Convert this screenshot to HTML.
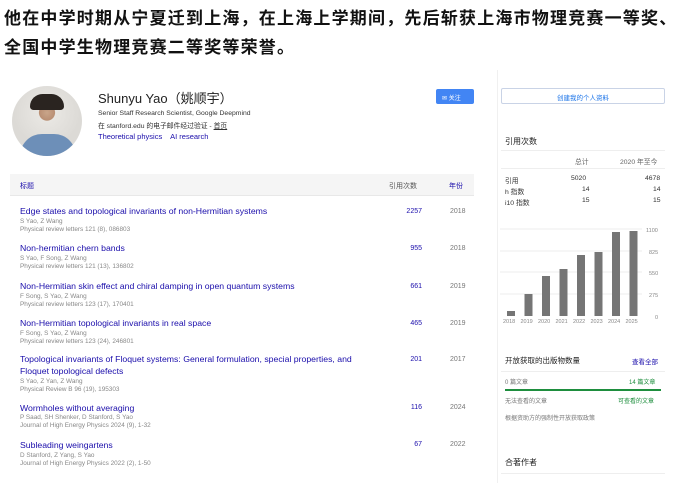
<!DOCTYPE html>
<html><head><meta charset="utf-8"><style>
*{margin:0;padding:0;box-sizing:border-box}
body{width:673px;height:483px;background:#fff;position:relative;overflow:hidden;font-family:"Liberation Sans","Noto Sans CJK SC",sans-serif;}
.a{position:absolute;white-space:nowrap}
.top{font-weight:bold;font-size:17px;letter-spacing:1.2px;color:#111;left:4px}
.t{color:#1a0dab;font-size:8.7px;left:20px}
.g{color:#888;font-size:6.4px;left:20px}
.n{color:#1a0dab;font-size:7px;width:40px;text-align:right}
.y{color:#777;font-size:7px}
.s{font-size:6.8px;color:#333}
</style></head><body>
<div class="a top" style="top:4px">他在中学时期从宁夏迁到上海，在上海上学期间，先后斩获上海市物理竞赛一等奖、</div>
<div class="a top" style="top:33px">全国中学生物理竞赛二等奖等荣誉。</div>

<div class="a" style="left:12px;top:86px;width:70px;height:70px;border-radius:50%;background:radial-gradient(circle at 50% 38%,#c9a58a 0,#b98f74 14%,#e8e6e2 15%,#dcdad6 60%);overflow:hidden">
 <div style="position:absolute;left:18px;top:8px;width:34px;height:16px;background:#2a2420;border-radius:14px 14px 4px 4px"></div>
 <div style="position:absolute;left:8px;top:48px;width:56px;height:30px;background:#6d8fb8;border-radius:22px 22px 0 0"></div>
</div>
<div class="a" style="left:98px;top:88px;font-size:13px;color:#222">Shunyu Yao（姚顺宇）</div>
<div class="a s" style="left:98px;top:110px">Senior Staff Research Scientist, Google Deepmind</div>
<div class="a s" style="left:98px;top:120px">在 stanford.edu 的电子邮件经过验证 - <u>首页</u></div>
<div class="a" style="left:98px;top:132px;font-size:7.5px;color:#1a0dab">Theoretical physics &nbsp;&nbsp; AI research</div>
<div class="a" style="left:436px;top:89px;width:38px;height:15px;background:#4285f4;border-radius:2px;color:#fff;font-size:6px;padding:4px 0 0 6px">✉ 关注</div>

<div class="a" style="left:10px;top:174px;width:464px;height:22px;background:#f5f5f5;border-bottom:1px solid #e8e8e8"></div>
<div class="a" style="left:20px;top:181px;font-size:7px;color:#1a0dab">标题</div>
<div class="a" style="left:389px;top:181px;font-size:7px;color:#555">引用次数</div>
<div class="a" style="left:449px;top:181px;font-size:7px;color:#1a0dab">年份</div>

<div class="a t" style="top:206px">Edge states and topological invariants of non-Hermitian systems</div>
<div class="a g" style="top:218px">S Yao, Z Wang</div><div class="a g" style="top:226px">Physical review letters 121 (8), 086803</div>
<div class="a n" style="left:382px;top:208px">2257</div><div class="a y" style="left:450px;top:208px">2018</div>

<div class="a t" style="top:243px">Non-hermitian chern bands</div>
<div class="a g" style="top:255px">S Yao, F Song, Z Wang</div><div class="a g" style="top:263px">Physical review letters 121 (13), 136802</div>
<div class="a n" style="left:382px;top:245px">955</div><div class="a y" style="left:450px;top:245px">2018</div>

<div class="a t" style="top:281px">Non-Hermitian skin effect and chiral damping in open quantum systems</div>
<div class="a g" style="top:293px">F Song, S Yao, Z Wang</div><div class="a g" style="top:301px">Physical review letters 123 (17), 170401</div>
<div class="a n" style="left:382px;top:283px">661</div><div class="a y" style="left:450px;top:283px">2019</div>

<div class="a t" style="top:318px">Non-Hermitian topological invariants in real space</div>
<div class="a g" style="top:330px">F Song, S Yao, Z Wang</div><div class="a g" style="top:338px">Physical review letters 123 (24), 246801</div>
<div class="a n" style="left:382px;top:320px">465</div><div class="a y" style="left:450px;top:320px">2019</div>

<div class="a t" style="top:354px">Topological invariants of Floquet systems: General formulation, special properties, and</div>
<div class="a t" style="top:366px">Floquet topological defects</div>
<div class="a g" style="top:378px">S Yao, Z Yan, Z Wang</div><div class="a g" style="top:386px">Physical Review B 96 (19), 195303</div>
<div class="a n" style="left:382px;top:356px">201</div><div class="a y" style="left:450px;top:356px">2017</div>

<div class="a t" style="top:403px">Wormholes without averaging</div>
<div class="a g" style="top:414px">P Saad, SH Shenker, D Stanford, S Yao</div><div class="a g" style="top:422px">Journal of High Energy Physics 2024 (9), 1-32</div>
<div class="a n" style="left:382px;top:404px">116</div><div class="a y" style="left:450px;top:404px">2024</div>

<div class="a t" style="top:440px">Subleading weingartens</div>
<div class="a g" style="top:452px">D Stanford, Z Yang, S Yao</div><div class="a g" style="top:460px">Journal of High Energy Physics 2022 (2), 1-50</div>
<div class="a n" style="left:382px;top:441px">67</div><div class="a y" style="left:450px;top:441px">2022</div>

<div class="a" style="left:497px;top:70px;width:1px;height:413px;background:#f0f0f0"></div>
<div class="a" style="left:501px;top:88px;width:164px;height:16px;border:1px solid #c9d3e6;border-radius:2px;font-size:6.5px;color:#1a73e8;text-align:center;padding-top:3px">创建我的个人资料</div>
<div class="a" style="left:505px;top:136px;font-size:8px;color:#222">引用次数</div>
<div class="a" style="left:501px;top:150px;width:164px;height:1px;background:#eee"></div>
<div class="a s" style="left:575px;top:156px;color:#666">总计</div>
<div class="a s" style="left:620px;top:156px;color:#666">2020 年至今</div>
<div class="a" style="left:501px;top:168px;width:164px;height:1px;background:#eee"></div>
<div class="a s" style="left:505px;top:175px">引用</div><div class="a s" style="left:571px;top:175px">5020</div><div class="a s" style="left:645px;top:175px">4678</div>
<div class="a s" style="left:505px;top:186px">h 指数</div><div class="a s" style="left:582px;top:186px">14</div><div class="a s" style="left:653px;top:186px">14</div>
<div class="a s" style="left:505px;top:197px">i10 指数</div><div class="a s" style="left:582px;top:197px">15</div><div class="a s" style="left:653px;top:197px">15</div>

<svg class="a" style="left:500px;top:222px" width="173" height="105">
<g stroke="#eee" stroke-width="1"><line x1="0" y1="7" x2="142" y2="7"/><line x1="0" y1="29" x2="142" y2="29"/><line x1="0" y1="50" x2="142" y2="50"/><line x1="0" y1="72" x2="142" y2="72"/></g>
<g fill="#757575">
<rect x="7" y="89" width="8" height="5"/><rect x="24.5" y="72" width="8" height="22"/><rect x="42" y="54" width="8" height="40"/><rect x="59.5" y="47" width="8" height="47"/><rect x="77" y="33" width="8" height="61"/><rect x="94.5" y="30" width="8" height="64"/><rect x="112" y="10" width="8" height="84"/><rect x="129.5" y="9" width="8" height="85"/>
</g>
<g font-size="5.5" fill="#888" font-family="Liberation Sans">
<text x="3" y="101">2018</text><text x="20.5" y="101">2019</text><text x="38" y="101">2020</text><text x="55.5" y="101">2021</text><text x="73" y="101">2022</text><text x="90.5" y="101">2023</text><text x="108" y="101">2024</text><text x="125.5" y="101">2025</text>
<text x="146" y="10">1100</text><text x="149" y="32">825</text><text x="149" y="53">550</text><text x="149" y="75">275</text><text x="155" y="97">0</text>
</g></svg>

<div class="a" style="left:505px;top:355px;font-size:7.5px;color:#222">开放获取的出版物数量</div>
<div class="a" style="left:632px;top:356px;font-size:6.5px;color:#1a0dab">查看全部</div>
<div class="a" style="left:501px;top:371px;width:164px;height:1px;background:#eee"></div>
<div class="a" style="left:505px;top:377px;font-size:6px;color:#777">0 篇文章</div>
<div class="a" style="left:629px;top:377px;font-size:6px;color:#1e8e3e">14 篇文章</div>
<div class="a" style="left:505px;top:389px;width:156px;height:2px;background:#1e8e3e"></div>
<div class="a" style="left:505px;top:396px;font-size:6px;color:#777">无法查看的文章</div>
<div class="a" style="left:618px;top:396px;font-size:6px;color:#1e8e3e">可查看的文章</div>
<div class="a" style="left:505px;top:413px;font-size:6px;color:#777">根据资助方的强制性开放获取政策</div>
<div class="a" style="left:505px;top:457px;font-size:8px;color:#222">合著作者</div>
<div class="a" style="left:501px;top:473px;width:164px;height:1px;background:#eee"></div>
</body></html>
